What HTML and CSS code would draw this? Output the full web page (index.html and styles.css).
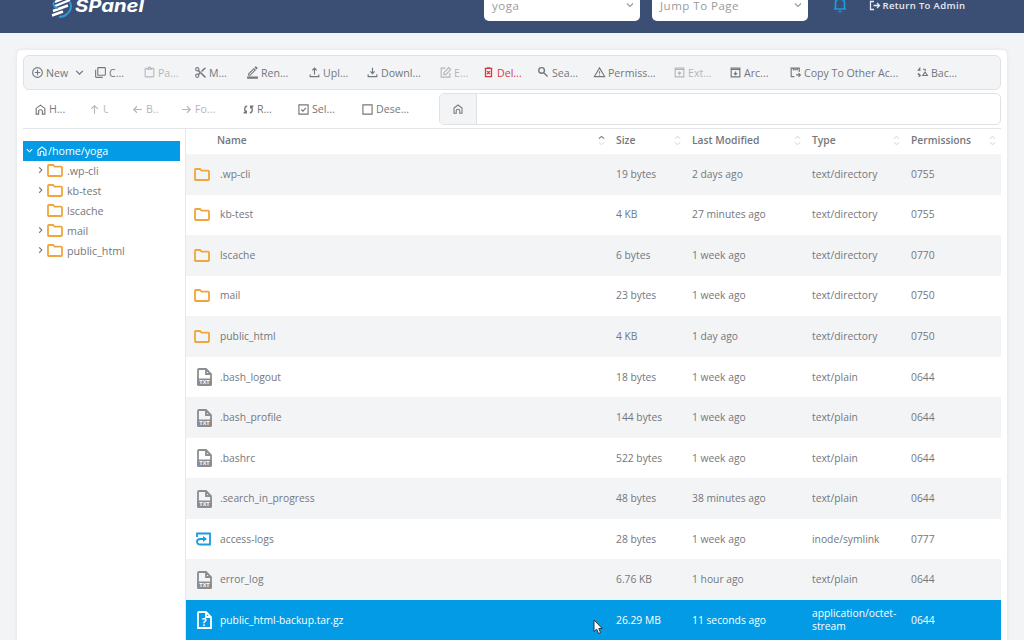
FILE: index.html
```html
<!DOCTYPE html>
<html lang="en">
<head>
  <meta charset="utf-8">
  <title>SPanel File Manager</title>
  <link rel="stylesheet" href="styles.css">
</head>
<body>
  <svg class="sprite">
    <symbol id="plus" viewBox="0 0 24 24"><path d="M12,20C7.59,20 4,16.41 4,12C4,7.59 7.59,4 12,4C16.41,4 20,7.59 20,12C20,16.41 16.41,20 12,20M12,2A10,10 0 0,0 2,12A10,10 0 0,0 12,22A10,10 0 0,0 22,12A10,10 0 0,0 12,2M13,7H11V11H7V13H11V17H13V13H17V11H13V7Z"/></symbol>
    <symbol id="copy" viewBox="0 0 24 24"><path d="M20,16V4H8V16H20M22,16A2,2 0 0,1 20,18H8C6.89,18 6,17.1 6,16V4C6,2.89 6.89,2 8,2H20A2,2 0 0,1 22,4V16M16,20V22H4A2,2 0 0,1 2,20V7H4V20H16Z"/></symbol>
    <symbol id="paste" viewBox="0 0 24 24"><path d="M19,3H14.82C14.4,1.84 13.3,1 12,1C10.7,1 9.6,1.84 9.18,3H5A2,2 0 0,0 3,5V19A2,2 0 0,0 5,21H19A2,2 0 0,0 21,19V5A2,2 0 0,0 19,3M12,3A1,1 0 0,1 13,4A1,1 0 0,1 12,5A1,1 0 0,1 11,4A1,1 0 0,1 12,3M7,7H17V5H19V19H5V5H7V7Z"/></symbol>
    <symbol id="cut" viewBox="0 0 24 24"><path d="M19,3L13,9L15,11L22,4V3M12,12.5A0.5,0.5 0 0,1 11.5,12A0.5,0.5 0 0,1 12,11.5A0.5,0.5 0 0,1 12.5,12A0.5,0.5 0 0,1 12,12.5M6,20A2,2 0 0,1 4,18C4,16.89 4.9,16 6,16A2,2 0 0,1 8,18C8,19.11 7.1,20 6,20M6,8A2,2 0 0,1 4,6C4,4.89 4.9,4 6,4A2,2 0 0,1 8,6C8,7.11 7.1,8 6,8M9.64,7.64C9.87,7.14 10,6.59 10,6A4,4 0 0,0 6,2A4,4 0 0,0 2,6A4,4 0 0,0 6,10C6.59,10 7.14,9.87 7.64,9.64L10,12L7.64,14.36C7.14,14.13 6.59,14 6,14A4,4 0 0,0 2,18A4,4 0 0,0 6,22A4,4 0 0,0 10,18C10,17.41 9.87,16.86 9.64,16.36L12,14L19,21H22V20L9.64,7.64Z"/></symbol>
    <symbol id="rename" viewBox="0 0 24 24"><path d="M2 19.500H22V23.500H2ZM4 14L14.500 3.500L18.500 7.500L8 18H4ZM6 14.800V16H7.200L15.700 7.500L14.500 6.300ZM15.500 2.500L17.300 .8Q18 .2 18.700 .8L21.200 3.300Q21.900 4 21.200 4.700L19.500 6.500Z" fill-rule="evenodd"/></symbol>
    <symbol id="upload" viewBox="0 0 24 24"><path d="M4 15.500V19.500H20V15.500M12 15.500V4M8 8L12 4L16 8" class="line"/></symbol>
    <symbol id="download" viewBox="0 0 24 24"><path d="M4 15V19.500H20V15M12 3V13.500M8 10L12 14L16 10" class="line"/></symbol>
    <symbol id="edit" viewBox="0 0 24 24"><path d="M12 4H4V20.500H20V13M9 12.500V16H12.500L21.500 6.500L18 3Z" class="line"/></symbol>
    <symbol id="trash" viewBox="0 0 24 24"><path d="M5 4.500H19M9 3.500H15M6.500 5V19.500H17.500V5M9.500 9.500L14.500 15M14.500 9.500L9.500 15" class="line bold"/></symbol>
    <symbol id="search" viewBox="0 0 24 24"><path d="M8.500 3A5.200 5.200 0 1 1 8.500 13.400A5.200 5.200 0 1 1 8.500 3M12.500 12.500L19.500 19.500" class="line bold"/></symbol>
    <symbol id="warn" viewBox="0 0 24 24"><path d="M12 3.500L21.500 19.500H2.500ZM12 9.500V14M12 15.500V17.500" class="line"/></symbol>
    <symbol id="extract" viewBox="0 0 24 24"><path d="M4 4H20V20H4ZM4 6.500H20M12 17V11M9 14L12 11L15 14" class="line"/></symbol>
    <symbol id="archive" viewBox="0 0 24 24"><path d="M4 4H20V20H4ZM4 6.500H20M12 10V16M9 13L12 16L15 13" class="line"/></symbol>
    <symbol id="copyto" viewBox="0 0 24 24"><path d="M10 19.500H4V4H19V11M8 3V7H15.500V3M13 16.500H20M17.500 13L21 16.500L17.500 20" class="line"/></symbol>
    <symbol id="backup" viewBox="0 0 24 24"><path d="M8 6H7Q4 6 4 9M4 13Q4 17 7 17.500M5.500 14.500L8 17.500L5 20M8 3L5.500 6L8 9M13 6H17V9M12.500 17.500H21L16.700 11Z" class="line"/></symbol>
    <symbol id="home" viewBox="0 0 24 24"><path d="M4 20.500V10L12 4L20 10V20.500H15.500V15Q15.500 12.500 12 12.500Q8.500 12.500 8.500 15V20.500Z" class="line"/></symbol>
    <symbol id="up" viewBox="0 0 24 24"><path d="M12 20V5M6 11L12 5L18 11" class="line"/></symbol>
    <symbol id="left" viewBox="0 0 24 24"><path d="M20 12H5M11 6L5 12L11 18" class="line"/></symbol>
    <symbol id="right" viewBox="0 0 24 24"><path d="M4 12H19M13 6L19 12L13 18" class="line"/></symbol>
    <symbol id="reload" viewBox="0 0 24 24"><path d="M9.500 5.500Q5 6 5 12Q5 15 7 17.500M3 18H8V14M14.500 18Q19 18 19 12Q19 9 17 6.500M21 6H16V10" class="line bold"/></symbol>
    <symbol id="check" viewBox="0 0 24 24"><path d="M3.500 3.500H20.500V20.500H3.500ZM8 12L11 15L16.500 9" class="line"/></symbol>
    <symbol id="box" viewBox="0 0 24 24"><path d="M3.500 3.500H20.500V20.500H3.500Z" class="line"/></symbol>
    <symbol id="caret" viewBox="0 0 10 10"><path d="M2 3.500L5 6.500L8 3.500" class="thin"/></symbol>
    <symbol id="chev" viewBox="0 0 10 10"><path d="M3.500 1.500L6.500 4.500L3.500 7.500" class="thin"/></symbol>
    <symbol id="sort" viewBox="0 0 10 14"><path d="M2 5L5 2.500L8 5M2 9L5 11.500L8 9" class="thin"/></symbol>
    <symbol id="asc" viewBox="0 0 10 14"><path d="M2 5L5 2.500L8 5" class="thin"/><path d="M2 9L5 11.500L8 9" class="thin faint"/></symbol>
    <symbol id="folder" viewBox="0 0 16 13"><path d="M1.800 1H6L7.500 2.600H14.200Q15 2.600 15 3.400V11.200Q15 12 14.200 12H1.800Q1 12 1 11.200V1.800Q1 1 1.800 1Z" class="fold"/></symbol>
    <symbol id="txt" viewBox="0 0 15 18"><path d="M1 11V2Q1 1 2 1H9L14 6V11M9 1V6H14" class="file"/><path d="M0 10.500H15V16.500Q15 18 13.500 18H1.500Q0 18 0 16.500Z"/><text x="7.500" y="16.200" class="txt-label">TXT</text></symbol>
    <symbol id="unknown" viewBox="0 0 15 18"><path d="M2 1H9L14 6V17H1V2Q1 1 2 1ZM9 1V6H14" class="file"/><text x="7.200" y="14.500" class="q-label">?</text></symbol>
    <symbol id="link" viewBox="0 0 15 14"><path d="M1 5V1.500H14V12.500H4.500Q1 12.500 1 9.700Q1 7 4.500 7H8" class="file"/><path d="M7 4L11 7L7 10Z"/></symbol>
  </svg>

  <header class="topbar">
    <svg class="logo" width="96" height="28" viewBox="0 0 96 28">
      <path d="M5 11L22 4M4 15.500L20 9M3 20L18 14.500M2 24.500L13 20.500" class="logo-lines"/>
      <path d="M4 11Q2 16 8 17M20 11Q23 18 17 23Q14 26 9 26" class="logo-arc"/>
      <text x="25" y="21" textLength="69" lengthAdjust="spacingAndGlyphs">SPanel</text>
    </svg>
    <div class="select user-select"><span>yoga</span><svg class="caret"><use href="#caret"/></svg></div>
    <div class="select"><span>Jump To Page</span><svg class="caret"><use href="#caret"/></svg></div>
    <div class="bell">
      <svg width="14" height="18" viewBox="0 0 14 18"><path d="M1 13H13M2.500 13V7Q2.500 3 7 3Q11.500 3 11.500 7V13M5.500 15.500H8.500"/></svg>
      <i class="dot"></i>
    </div>
    <a class="return"><svg width="12" height="12" viewBox="0 0 12 12"><path d="M5 1.500H1.500V9.500H5M4.500 5.500H10.500M8 3L10.500 5.500L8 8"/></svg>Return To Admin</a>
  </header>

  <main class="card">
    <div class="toolbar actions">
      <a class="tool"><svg><use href="#plus"/></svg>New<svg class="caret"><use href="#caret"/></svg></a>
      <a class="tool"><svg><use href="#copy"/></svg>C...</a>
      <a class="tool off"><svg><use href="#paste"/></svg>Pa...</a>
      <a class="tool"><svg><use href="#cut"/></svg>M...</a>
      <a class="tool"><svg><use href="#rename"/></svg>Ren...</a>
      <a class="tool"><svg><use href="#upload"/></svg>Upl...</a>
      <a class="tool"><svg><use href="#download"/></svg>Downl...</a>
      <a class="tool off"><svg><use href="#edit"/></svg>E...</a>
      <a class="tool danger"><svg><use href="#trash"/></svg>Del...</a>
      <a class="tool"><svg><use href="#search"/></svg>Sea...</a>
      <a class="tool"><svg><use href="#warn"/></svg>Permiss...</a>
      <a class="tool off"><svg><use href="#extract"/></svg>Ext...</a>
      <a class="tool"><svg><use href="#archive"/></svg>Arc...</a>
      <a class="tool"><svg><use href="#copyto"/></svg>Copy To Other Ac...</a>
      <a class="tool"><svg><use href="#backup"/></svg>Bac...</a>
    </div>
    <div class="navrow">
      <div class="toolbar nav">
        <a class="tool"><svg><use href="#home"/></svg>H...</a>
        <a class="tool off"><svg><use href="#up"/></svg><span class="cut">U</span></a>
        <a class="tool off"><svg><use href="#left"/></svg>B..</a>
        <a class="tool off"><svg><use href="#right"/></svg>Fo...</a>
        <a class="tool"><svg><use href="#reload"/></svg>R...</a>
        <a class="tool"><svg><use href="#check"/></svg>Sel...</a>
        <a class="tool"><svg><use href="#box"/></svg>Dese...</a>
      </div>
      <div class="path"><span class="path-home"><svg><use href="#home"/></svg></span></div>
    </div>

    <div class="browser">
      <ul class="tree">
        <li class="root"><svg class="chev"><use href="#caret"/></svg><svg class="house"><use href="#home"/></svg>/home/yoga</li>
        <li><svg class="chev"><use href="#chev"/></svg><svg class="folder"><use href="#folder"/></svg>.wp-cli</li>
        <li><svg class="chev"><use href="#chev"/></svg><svg class="folder"><use href="#folder"/></svg>kb-test</li>
        <li><svg class="chev"></svg><svg class="folder"><use href="#folder"/></svg>lscache</li>
        <li><svg class="chev"><use href="#chev"/></svg><svg class="folder"><use href="#folder"/></svg>mail</li>
        <li><svg class="chev"><use href="#chev"/></svg><svg class="folder"><use href="#folder"/></svg>public_html</li>
      </ul>
      <div class="files">
        <div class="row head"><span class="name">Name<svg class="sort asc"><use href="#asc"/></svg></span><span>Size<svg class="sort"><use href="#sort"/></svg></span><span>Last Modified<svg class="sort"><use href="#sort"/></svg></span><span>Type<svg class="sort"><use href="#sort"/></svg></span><span>Permissions<svg class="sort last"><use href="#sort"/></svg></span></div>
        <div class="row"><span class="name"><svg class="folder"><use href="#folder"/></svg>.wp-cli</span><span>19 bytes</span><span>2 days ago</span><span>text/directory</span><span>0755</span></div>
        <div class="row"><span class="name"><svg class="folder"><use href="#folder"/></svg>kb-test</span><span>4 KB</span><span>27 minutes ago</span><span>text/directory</span><span>0755</span></div>
        <div class="row"><span class="name"><svg class="folder"><use href="#folder"/></svg>lscache</span><span>6 bytes</span><span>1 week ago</span><span>text/directory</span><span>0770</span></div>
        <div class="row"><span class="name"><svg class="folder"><use href="#folder"/></svg>mail</span><span>23 bytes</span><span>1 week ago</span><span>text/directory</span><span>0750</span></div>
        <div class="row"><span class="name"><svg class="folder"><use href="#folder"/></svg>public_html</span><span>4 KB</span><span>1 day ago</span><span>text/directory</span><span>0750</span></div>
        <div class="row"><span class="name"><svg class="doc"><use href="#txt"/></svg>.bash_logout</span><span>18 bytes</span><span>1 week ago</span><span>text/plain</span><span>0644</span></div>
        <div class="row"><span class="name"><svg class="doc"><use href="#txt"/></svg>.bash_profile</span><span>144 bytes</span><span>1 week ago</span><span>text/plain</span><span>0644</span></div>
        <div class="row"><span class="name"><svg class="doc"><use href="#txt"/></svg>.bashrc</span><span>522 bytes</span><span>1 week ago</span><span>text/plain</span><span>0644</span></div>
        <div class="row"><span class="name"><svg class="doc"><use href="#txt"/></svg>.search_in_progress</span><span>48 bytes</span><span>38 minutes ago</span><span>text/plain</span><span>0644</span></div>
        <div class="row"><span class="name"><svg class="symlink"><use href="#link"/></svg>access-logs</span><span>28 bytes</span><span>1 week ago</span><span>inode/symlink</span><span>0777</span></div>
        <div class="row"><span class="name"><svg class="doc"><use href="#txt"/></svg>error_log</span><span>6.76 KB</span><span>1 hour ago</span><span>text/plain</span><span>0644</span></div>
        <div class="row selected"><span class="name"><svg class="doc"><use href="#unknown"/></svg>public_html-backup.tar.gz</span><span>26.29 MB</span><span>11 seconds ago</span><span>application/octet-<br>stream</span><span>0644</span></div>
      </div>
    </div>
  </main>

  <svg class="cursor" width="10" height="16" viewBox="0 0 10 16"><path d="M1 1V12.500L3.700 10.200L5.500 14.500L7.600 13.600L5.800 9.500H9.200Z"/></svg>
</body>
</html>
```
FILE: styles.css
```css
* {
  box-sizing: border-box;
}
body {
  margin: 0;
  height: 640px;
  overflow: hidden;
  background: #f3f4f6;
  color: #74777d;
  font-family: "Open Sans", "Noto Sans", sans-serif;
  font-size: 10.3px;
}
svg {
  fill: currentColor;
  flex: none;
}
.sprite {
  display: none;
}
.line, .thin, .fold, .file {
  fill: none;
  stroke: currentColor;
}
.line {
  stroke-width: 2.1;
}
.bold {
  stroke-width: 2.5;
}
.thin {
  stroke-width: 1.2;
}
.faint {
  stroke: #e3e5e8;
}
.fold {
  stroke-width: 1.8;
}
.file {
  stroke-width: 1.8;
}
.txt-label {
  font: bold 5.5px "Liberation Sans", sans-serif;
  text-anchor: middle;
  fill: #fff;
}
.q-label {
  font: bold 10px "Open Sans", sans-serif;
  text-anchor: middle;
}

/* header */
.topbar {
  display: flex;
  align-items: center;
  height: 56px;
  margin-top: -23px;
  padding-left: 50px;
  background: #3b4f75;
  color: #fff;
}
.logo {
  margin-right: 338px;
}
.logo text {
  font: italic 700 18px "Inter", sans-serif;
}
.logo-lines {
  fill: none;
  stroke: #fff;
  stroke-width: 2.4;
}
.logo-arc {
  fill: none;
  stroke: #2b9bd8;
  stroke-width: 2;
}
.select {
  display: flex;
  justify-content: space-between;
  align-items: center;
  width: 156px;
  height: 32px;
  padding: 0 5px 0 8px;
  border-radius: 5px;
  background: #fff;
  color: #9a9b9d;
  font-size: 11.5px;
  letter-spacing: 0.5px;
}
.user-select {
  margin-right: 12px;
}
.caret {
  width: 10px;
  height: 10px;
}
.bell {
  position: relative;
  height: 18px;
  margin: 0 22px 0 25px;
}
.bell path {
  fill: none;
  stroke: #1b9be0;
  stroke-width: 1.7;
}
.dot {
  position: absolute;
  top: -2px;
  right: -1px;
  width: 5px;
  height: 5px;
  border-radius: 50%;
  background: #f0a63a;
}
.return {
  display: flex;
  align-items: center;
  gap: 1.5px;
  padding-top: 1px;
  color: #e8ebf1;
  font-size: 9.5px;
  font-weight: 600;
  letter-spacing: 0.35px;
}
.return path {
  fill: none;
  stroke: #e8ebf1;
  stroke-width: 1.3;
}

/* file manager card */
.card {
  width: 990px;
  height: 600px;
  margin: 17px 0 0 17px;
  padding: 5px 6px 0;
  border-radius: 5px;
  background: #fff;
  box-shadow: 0 0 4px rgba(0, 0, 0, 0.08);
}
.toolbar {
  display: grid;
  align-items: center;
  font-size: 10.6px;
}
.actions {
  height: 35px;
  padding-left: 6px;
  border: 1px solid #dfe1e4;
  border-radius: 6px;
  background: #f3f4f6;
  grid-template-columns: 63px 49px 51px 52px 62px 58px 73px 43px 55px 56px 80px 56px 60px 127px 60px;
}
.tool {
  display: flex;
  align-items: center;
  gap: 2px;
  white-space: nowrap;
}
.tool svg {
  width: 13px;
  height: 13px;
  margin-left: 1px;
}
.tool .caret {
  width: 11px;
  height: 11px;
  margin-left: 4px;
}
.off {
  color: #b4b6ba;
}
.danger {
  color: #d63a3f;
}
.cut {
  width: 5px;
  overflow: hidden;
}
.navrow {
  display: flex;
  height: 39px;
  padding-top: 3px;
  border-bottom: 1px solid #e3e5e8;
}
.nav {
  width: 416px;
  height: 32px;
  padding-left: 10px;
  grid-template-columns: 54px 43px 49px 62px 55px 64px 70px;
}
.path {
  flex: 1;
  display: flex;
  height: 32px;
  border: 1px solid #dfe1e4;
  border-radius: 5px;
}
.path-home {
  display: flex;
  align-items: center;
  justify-content: center;
  width: 37px;
  border-right: 1px solid #dfe1e4;
  border-radius: 4px 0 0 4px;
  background: #f3f4f6;
}
.path-home svg {
  width: 12px;
  height: 12px;
}

/* tree and file list */
.browser {
  display: flex;
}
.tree {
  width: 157px;
  margin: 12px 5px 0 0;
  padding: 0;
  list-style: none;
}
.tree li {
  display: flex;
  align-items: center;
  height: 20px;
  padding: 0 0 0 13px;
  font-size: 10.7px;
}
.tree li .folder, .tree li .chev {
  margin-bottom: 2px;
}
.tree .root {
  padding-left: 2px;
  background: #039be5;
  color: #fff;
}
.chev {
  width: 9px;
  height: 9px;
  margin-right: 2px;
}
.house {
  width: 12px;
  height: 12px;
}
.folder {
  width: 16px;
  height: 13px;
  margin-right: 4px;
  color: #f0a63a;
}
.files {
  flex: 1;
  border-left: 1px solid #e6e8ea;
}
.row {
  display: grid;
  grid-template-columns: 430px 76px 120px 99px 90px;
  align-items: center;
  height: 40.55px;
  line-height: 13px;
}
.row:nth-child(even) {
  background: #f3f4f6;
}
.head {
  height: 25px;
  padding-bottom: 3px;
  font-weight: 600;
}
.head span {
  display: flex;
  justify-content: space-between;
  align-items: center;
}
.row .name {
  display: flex;
  align-items: center;
  padding-left: 8px;
}
.head .name {
  padding-left: 31px;
}
.sort {
  width: 9px;
  height: 13px;
  margin-right: 10px;
  color: #dddfe2;
}
.last {
  margin-right: 4px;
}
.asc {
  color: #75787e;
}
.name .folder {
  margin-right: 10px;
}
.doc {
  width: 15px;
  height: 18px;
  margin: 0 8px 0 3px;
  color: #8b8d90;
}
.symlink {
  width: 15px;
  height: 14px;
  margin: 0 9px 0 2px;
  color: #1b9be0;
}
.row.selected, .selected .doc {
  background: #039be5;
  color: #fff;
}
.cursor {
  position: absolute;
  left: 593px;
  top: 619px;
}
.cursor path {
  fill: #fff;
  stroke: #23364a;
}
```
